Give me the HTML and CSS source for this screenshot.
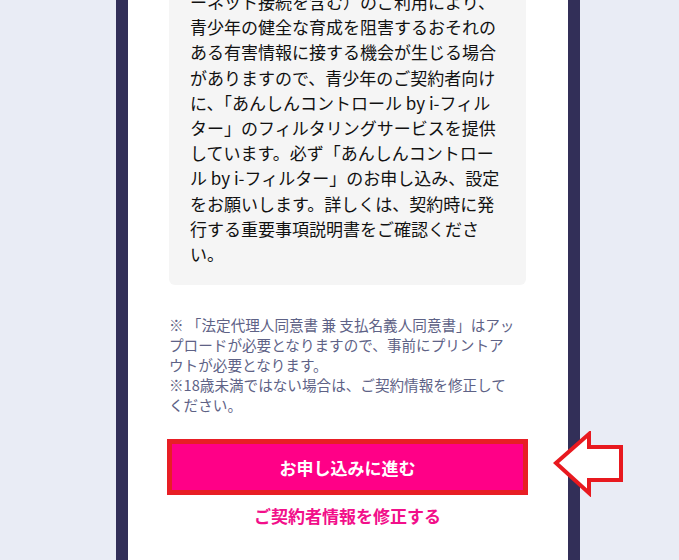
FILE: index.html
```html
<!DOCTYPE html>
<html lang="ja">
<head>
<meta charset="utf-8">
<title>ご契約内容の確認</title>
<link rel="stylesheet" href="styles.css">
</head>
<body>
<div class="page">
  <div class="card">
    <div class="notice">
      ーネット接続を含む）のご利用により、<br>青少年の健全な育成を阻害するおそれの<br>ある有害情報に接する機会が生じる場合<br>がありますので、青少年のご契約者向け<br>に、「あんしんコントロール by i-フィル<br>ター」のフィルタリングサービスを提供<br>しています。必ず「あんしんコントロー<br>ル by i-フィルター」のお申し込み、設定<br>をお願いします。詳しくは、契約時に発<br>行する重要事項説明書をご確認くださ<br>い。
    </div>
    <p class="note">※ 「法定代理人同意書 兼 支払名義人同意書」はアッ<br>プロードが必要となりますので、事前にプリントア<br>ウトが必要となります。<br>※18歳未満ではない場合は、ご契約情報を修正して<br>ください。</p>
    <button class="primary" type="button">お申し込みに進む</button>
    <a class="edit-link" href="#">ご契約者情報を修正する</a>
  </div>
</div>
<svg class="pointer" width="74" height="66" viewBox="0 0 74 66" aria-hidden="true">
  <polygon points="3,32 36,3 36,16 68,16 68,49 36,49 36,62" fill="#ffffff" stroke="#e8191f" stroke-width="4" stroke-linejoin="miter"/>
</svg>
</body>
</html>
```

FILE: styles.css
```css
html, body {
  margin: 0;
  padding: 0;
}
body {
  background: #e9ecf5;
  font-family: "Noto Sans CJK JP", "Noto Sans", sans-serif;
  height: 560px;
  overflow: hidden;
}
.page {
  margin-left: 116px;
  width: 464px;
}
.card {
  background: #ffffff;
  border-left: 12px solid #322f58;
  border-right: 12px solid #322f58;
  padding: 0 42px 40px 41px;
  margin-top: -11px;
  min-height: 620px;
}
.notice {
  background: #f5f5f5;
  border-radius: 0 0 6px 6px;
  padding: 0 16px 19px 21px;
  font-size: 17px;
  line-height: 25.2px;
  color: #111111;
  white-space: nowrap;
}
.note {
  margin: 30px 0 0;
  font-size: 14.6px;
  line-height: 20px;
  color: #5e6286;
  white-space: nowrap;
}
.primary {
  display: block;
  box-sizing: border-box;
  width: calc(100% + 4px);
  margin: 24px -2px 0;
  height: 56px;
  border: 5px solid #e81e25;
  background: #ff0087;
  color: #ffffff;
  font-family: inherit;
  font-size: 17px;
  font-weight: 700;
  cursor: pointer;
}
.edit-link {
  display: block;
  margin-top: 8px;
  text-align: center;
  font-size: 17px;
  line-height: 26px;
  font-weight: 700;
  color: #f20f8a;
  text-decoration: none;
}
.pointer {
  position: absolute;
  left: 553px;
  top: 431px;
}
```
